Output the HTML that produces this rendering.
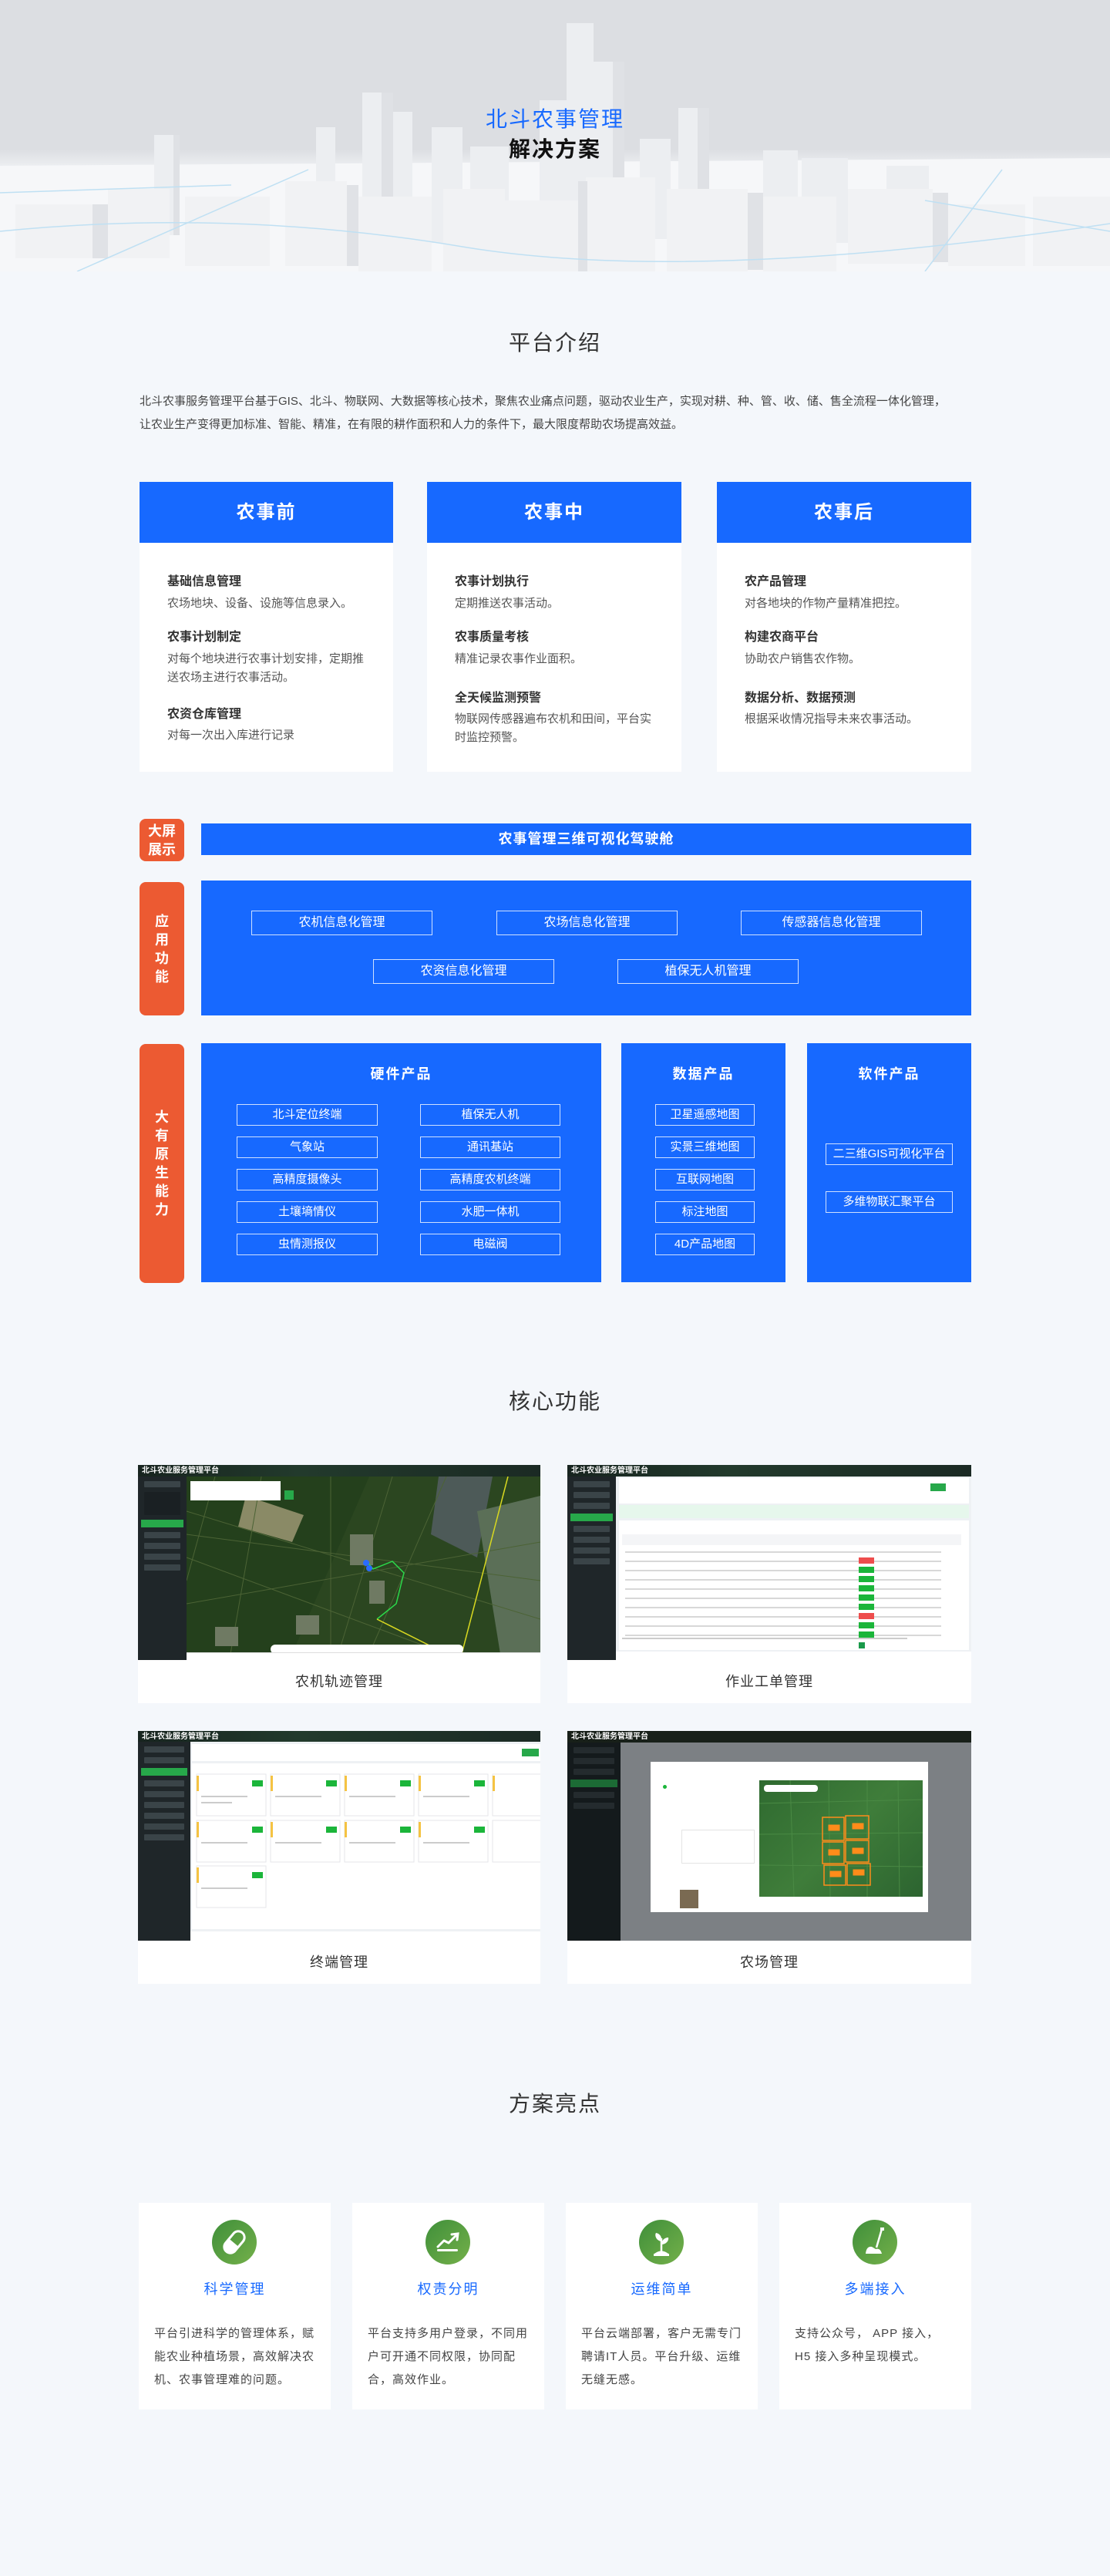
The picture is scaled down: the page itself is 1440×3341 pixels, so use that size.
<!DOCTYPE html>
<html><head><meta charset="utf-8">
<style>
*{margin:0;padding:0;box-sizing:border-box}
body{width:1440px;height:3341px;background:#f4f7fb;font-family:"Liberation Sans","Noto Sans CJK SC",sans-serif;position:relative;overflow:hidden;color:#333}
.a{position:absolute}
.h2{position:absolute;left:0;width:1440px;text-align:center;font-size:28px;color:#333;letter-spacing:2px}
.card{position:absolute;top:625px;height:376px;background:#fff}
.card .hd{height:79px;background:#1769ff;color:#fff;font-size:24px;font-weight:bold;text-align:center;line-height:79px;letter-spacing:2px}
.it{position:absolute;left:36px;font-size:16px;font-weight:bold;color:#333;line-height:24px}
.ds{position:absolute;left:36px;font-size:15px;color:#555;line-height:24px}
.lab{position:absolute;left:181px;width:58px;background:#ec5a32;border-radius:8px;color:#fff;font-weight:bold;font-size:18px;text-align:center;display:flex;align-items:center;justify-content:center;line-height:24px}
.blue{position:absolute;background:#1769ff;color:#fff}
.btn{position:absolute;border:1.5px solid #cfe0ff;color:#fff;text-align:center;font-size:16px}
.bt{font-size:18px;font-weight:bold;position:absolute;left:0;right:0;text-align:center;top:26px;letter-spacing:2px}
.shot{position:absolute;overflow:hidden;background:#eef1f4}
.top{position:absolute;left:0;top:0;right:0;height:15px;background:linear-gradient(90deg,#17241f,#223a2c 40%,#1b2a24);color:#fff;font-size:10px;font-weight:bold;line-height:15px;padding-left:5px}
.side{position:absolute;left:0;top:15px;bottom:0;width:63px;background:#1f2629}
.side i{display:block;height:8px;margin:6px 8px;background:#3a4448;border-radius:1px}
.side b{display:block;height:10px;margin:6px 4px;background:#27a84a}
.cap{position:absolute;background:#fff;text-align:center;font-size:18px;color:#333;letter-spacing:1px}
.hc{position:absolute;top:2857px;width:249px;height:268px;background:#fff}
.hc .ic{position:absolute;left:95px;top:22px;width:58px;height:58px;border-radius:50%;background:linear-gradient(135deg,#3f8f3a,#74b04a)}
.hc .t{position:absolute;top:98px;left:0;right:0;text-align:center;color:#1769ff;font-size:18px;letter-spacing:2px}
.hc .d{position:absolute;top:155px;left:20px;right:18px;font-size:15px;color:#444;line-height:30px;letter-spacing:1px}
</style></head><body>

<!-- hero -->
<div class="a" style="left:0;top:0;width:1440px;height:352px;background:linear-gradient(180deg,#dcdee2 0%,#dcdee2 55%,#eef0f3 62%,#f5f6f8 100%);overflow:hidden">
<svg width="1440" height="352" style="position:absolute;left:0;top:0">
<polygon points="0,215 1440,205 1440,352 0,352" fill="#f6f7f9"/>
<g fill="#eceef1">
<rect x="735" y="30" width="35" height="240"/><rect x="700" y="130" width="50" height="200"/><rect x="765" y="80" width="45" height="250"/>
<rect x="880" y="140" width="40" height="160"/><rect x="470" y="120" width="40" height="180"/><rect x="505" y="145" width="30" height="150"/>
<rect x="200" y="175" width="28" height="130"/><rect x="410" y="165" width="25" height="130"/><rect x="560" y="165" width="40" height="150"/>
<rect x="610" y="190" width="50" height="120"/><rect x="830" y="180" width="40" height="130"/>
<rect x="990" y="195" width="45" height="120"/><rect x="1040" y="205" width="60" height="110"/><rect x="1150" y="215" width="55" height="100"/>
</g>
<g fill="#dfe1e5"><rect x="795" y="80" width="15" height="250"/><rect x="495" y="120" width="15" height="180"/><rect x="905" y="140" width="15" height="160"/><rect x="225" y="175" width="8" height="130"/></g>
<g fill="#f1f2f4">
<rect x="20" y="265" width="100" height="70"/><rect x="140" y="245" width="80" height="90"/><rect x="240" y="255" width="110" height="90"/>
<rect x="370" y="235" width="80" height="110"/><rect x="465" y="255" width="95" height="97"/><rect x="575" y="245" width="80" height="107"/>
<rect x="640" y="260" width="110" height="92"/><rect x="760" y="230" width="90" height="122"/><rect x="865" y="245" width="105" height="107"/>
<rect x="990" y="255" width="95" height="97"/><rect x="1100" y="245" width="110" height="97"/><rect x="1230" y="265" width="100" height="80"/>
<rect x="1340" y="255" width="100" height="90"/>
</g>
<g fill="#e0e2e6"><rect x="120" y="265" width="20" height="70"/><rect x="450" y="240" width="15" height="105"/><rect x="750" y="235" width="12" height="117"/><rect x="970" y="250" width="20" height="100"/><rect x="1210" y="250" width="20" height="90"/></g>
<g stroke="#bfe0f3" stroke-width="1.5" fill="none"><path d="M0 300 Q300 270 600 320 T1440 290"/><path d="M100 352 L400 220"/><path d="M1300 220 L1200 352"/><path d="M0 250 L300 240"/><path d="M1200 260 L1440 300"/></g>
</svg>
<div class="a" style="left:0;width:1440px;top:133px;text-align:center;font-size:28px;color:#1769ff;letter-spacing:2px">北斗农事管理</div>
<div class="a" style="left:0;width:1440px;top:172px;text-align:center;font-size:28px;font-weight:bold;color:#111;letter-spacing:2px">解决方案</div>
</div>

<div class="h2" style="top:423px">平台介绍</div>
<div class="a" style="left:181px;top:506px;width:1080px;font-size:15px;color:#444;line-height:30px">北斗农事服务管理平台基于GIS、北斗、物联网、大数据等核心技术，聚焦农业痛点问题，驱动农业生产，实现对耕、种、管、收、储、售全流程一体化管理，<br>让农业生产变得更加标准、智能、精准，在有限的耕作面积和人力的条件下，最大限度帮助农场提高效益。</div>

<div class="card" style="left:181px;width:329px"><div class="hd">农事前</div>
<div class="it" style="top:118px">基础信息管理</div><div class="ds" style="top:146px">农场地块、设备、设施等信息录入。</div>
<div class="it" style="top:190px">农事计划制定</div><div class="ds" style="top:218px">对每个地块进行农事计划安排，定期推<br>送农场主进行农事活动。</div>
<div class="it" style="top:290px">农资仓库管理</div><div class="ds" style="top:317px">对每一次出入库进行记录</div></div>

<div class="card" style="left:554px;width:330px"><div class="hd">农事中</div>
<div class="it" style="top:118px">农事计划执行</div><div class="ds" style="top:146px">定期推送农事活动。</div>
<div class="it" style="top:190px">农事质量考核</div><div class="ds" style="top:218px">精准记录农事作业面积。</div>
<div class="it" style="top:269px">全天候监测预警</div><div class="ds" style="top:296px">物联网传感器遍布农机和田间，平台实<br>时监控预警。</div></div>

<div class="card" style="left:930px;width:330px"><div class="hd">农事后</div>
<div class="it" style="top:118px">农产品管理</div><div class="ds" style="top:146px">对各地块的作物产量精准把控。</div>
<div class="it" style="top:190px">构建农商平台</div><div class="ds" style="top:218px">协助农户销售农作物。</div>
<div class="it" style="top:269px">数据分析、数据预测</div><div class="ds" style="top:296px">根据采收情况指导未来农事活动。</div></div>

<!-- architecture -->
<div class="lab" style="top:1062px;height:55px">大屏<br>展示</div>
<div class="blue" style="left:261px;top:1068px;width:999px;height:41px;text-align:center;line-height:41px;font-size:18px;font-weight:bold;letter-spacing:1px">农事管理三维可视化驾驶舱</div>

<div class="lab" style="top:1144px;height:173px;width:58px">应<br>用<br>功<br>能</div>
<div class="blue" style="left:261px;top:1142px;width:999px;height:175px"></div>
<div class="btn" style="left:326px;top:1181px;width:235px;height:32px;line-height:29px">农机信息化管理</div>
<div class="btn" style="left:644px;top:1181px;width:235px;height:32px;line-height:29px">农场信息化管理</div>
<div class="btn" style="left:961px;top:1181px;width:235px;height:32px;line-height:29px">传感器信息化管理</div>
<div class="btn" style="left:484px;top:1244px;width:235px;height:32px;line-height:29px">农资信息化管理</div>
<div class="btn" style="left:801px;top:1244px;width:235px;height:32px;line-height:29px">植保无人机管理</div>

<div class="lab" style="top:1354px;height:310px">大<br>有<br>原<br>生<br>能<br>力</div>
<div class="blue" style="left:261px;top:1353px;width:519px;height:310px"><div class="bt">硬件产品</div></div>
<div class="blue" style="left:806px;top:1353px;width:213px;height:310px"><div class="bt">数据产品</div></div>
<div class="blue" style="left:1047px;top:1353px;width:213px;height:310px"><div class="bt">软件产品</div></div>

<div class="btn" style="left:307px;top:1432px;width:183px;height:28px;line-height:25px;font-size:15px">北斗定位终端</div>
<div class="btn" style="left:545px;top:1432px;width:182px;height:28px;line-height:25px;font-size:15px">植保无人机</div>
<div class="btn" style="left:307px;top:1474px;width:183px;height:28px;line-height:25px;font-size:15px">气象站</div>
<div class="btn" style="left:545px;top:1474px;width:182px;height:28px;line-height:25px;font-size:15px">通讯基站</div>
<div class="btn" style="left:307px;top:1516px;width:183px;height:28px;line-height:25px;font-size:15px">高精度摄像头</div>
<div class="btn" style="left:545px;top:1516px;width:182px;height:28px;line-height:25px;font-size:15px">高精度农机终端</div>
<div class="btn" style="left:307px;top:1558px;width:183px;height:28px;line-height:25px;font-size:15px">土壤墒情仪</div>
<div class="btn" style="left:545px;top:1558px;width:182px;height:28px;line-height:25px;font-size:15px">水肥一体机</div>
<div class="btn" style="left:307px;top:1600px;width:183px;height:28px;line-height:25px;font-size:15px">虫情测报仪</div>
<div class="btn" style="left:545px;top:1600px;width:182px;height:28px;line-height:25px;font-size:15px">电磁阀</div>

<div class="btn" style="left:850px;top:1432px;width:129px;height:28px;line-height:25px;font-size:15px">卫星遥感地图</div>
<div class="btn" style="left:850px;top:1474px;width:129px;height:28px;line-height:25px;font-size:15px">实景三维地图</div>
<div class="btn" style="left:850px;top:1516px;width:129px;height:28px;line-height:25px;font-size:15px">互联网地图</div>
<div class="btn" style="left:850px;top:1558px;width:129px;height:28px;line-height:25px;font-size:15px">标注地图</div>
<div class="btn" style="left:850px;top:1600px;width:129px;height:28px;line-height:25px;font-size:15px">4D产品地图</div>

<div class="btn" style="left:1071px;top:1483px;width:165px;height:28px;line-height:25px;font-size:15px">二三维GIS可视化平台</div>
<div class="btn" style="left:1071px;top:1545px;width:165px;height:28px;line-height:25px;font-size:15px">多维物联汇聚平台</div>

<!-- core -->
<div class="h2" style="top:1796px">核心功能</div>

<!-- shot 1 map -->
<div class="shot" style="left:179px;top:1900px;width:522px;height:253px;background:#2d4a22">
<svg width="522" height="253" style="position:absolute;left:0;top:0">
<rect x="63" y="15" width="459" height="230" fill="#2b4620"/>
<polygon points="63,15 300,15 200,245 63,245" fill="#24401c"/>
<polygon points="140,40 215,65 200,100 130,80" fill="#8a8a66"/>
<polygon points="390,15 460,15 440,120 380,90" fill="#4d5a58"/>
<polygon points="440,60 522,40 522,245 470,245" fill="#5b6f57"/>
<g stroke="#4c6335" stroke-width="1"><path d="M63 60 L522 200"/><path d="M63 120 L400 245"/><path d="M250 15 L250 245"/><path d="M330 15 L260 245"/><path d="M100 15 L63 150"/><path d="M400 15 L300 245"/><path d="M63 90 L522 150"/><path d="M63 180 L522 100"/><path d="M160 15 L120 245"/></g>
<g fill="#6f7a63"><rect x="275" y="90" width="30" height="40"/><rect x="300" y="150" width="20" height="30"/><rect x="100" y="210" width="30" height="25"/><rect x="205" y="195" width="30" height="25"/></g>
<path d="M297 125 L305 135 L330 125 L345 140 L335 180 L310 200" stroke="#2bd84a" stroke-width="1.5" fill="none"/>
<path d="M310 200 L400 245" stroke="#d8d820" stroke-width="1.5"/><path d="M480 15 L420 245" stroke="#d8d820" stroke-width="1.5"/>
<circle cx="296" cy="127" r="4" fill="#2a6cff"/><circle cx="300" cy="134" r="4" fill="#2a6cff"/>
<rect x="172" y="233" width="250" height="12" rx="6" fill="#fff"/>
<rect x="68" y="21" width="117" height="25" fill="#fff"/><rect x="190" y="33" width="12" height="12" fill="#27a84a"/>
</svg>
<div class="top">北斗农业服务管理平台</div>
<div class="side"><i></i><i style="background:#1a2023;height:30px"></i><b></b><i></i><i></i><i></i><i></i></div>
<div class="a" style="left:63px;right:0;bottom:0;height:10px;background:#fff;border-top:1px solid #ddd"></div>
</div>
<div class="cap" style="left:179px;top:2153px;width:522px;height:56px;line-height:56px">农机轨迹管理</div>

<!-- shot 2 table -->
<div class="shot" style="left:736px;top:1900px;width:524px;height:253px">
<div class="top">北斗农业服务管理平台</div>
<div class="side"><i></i><i></i><i></i><b></b><i></i><i></i><i></i><i></i></div>
<div class="a" style="left:67px;top:17px;width:454px;height:33px;background:#fff"><div class="a" style="right:30px;top:7px;width:20px;height:10px;background:#27a84a"></div></div>
<div class="a" style="left:67px;top:52px;width:454px;height:17px;background:#e6f7ec"></div>
<div class="a" style="left:67px;top:72px;width:454px;height:168px;background:#fff">
<svg width="454" height="168">
<rect x="4" y="18" width="440" height="14" fill="#f4f5f7"/>
<g fill="#d8d8d8"><rect x="8" y="40" width="410" height="2"/><rect x="8" y="52" width="410" height="2"/><rect x="8" y="64" width="410" height="2"/><rect x="8" y="76" width="410" height="2"/><rect x="8" y="88" width="410" height="2"/><rect x="8" y="100" width="410" height="2"/><rect x="8" y="112" width="410" height="2"/><rect x="8" y="124" width="410" height="2"/><rect x="8" y="136" width="410" height="2"/><rect x="8" y="148" width="410" height="2"/></g>
<g fill="#1bb53a"><rect x="311" y="60" width="20" height="8"/><rect x="311" y="72" width="20" height="8"/><rect x="311" y="84" width="20" height="8"/><rect x="311" y="96" width="20" height="8"/><rect x="311" y="108" width="20" height="8"/><rect x="311" y="132" width="20" height="8"/><rect x="311" y="144" width="20" height="8"/></g>
<g fill="#ee4d4d"><rect x="311" y="48" width="20" height="8"/><rect x="311" y="120" width="20" height="8"/></g>
<rect x="4" y="152" width="370" height="2" fill="#ccc"/><rect x="311" y="158" width="8" height="8" fill="#1a9a4a"/>
</svg></div>
<div class="a" style="left:63px;right:0;bottom:0;height:11px;background:#fff"></div>
</div>
<div class="cap" style="left:736px;top:2153px;width:524px;height:56px;line-height:56px">作业工单管理</div>

<!-- shot 3 grid -->
<div class="shot" style="left:179px;top:2245px;width:522px;height:272px">
<div class="top" style="height:14px">北斗农业服务管理平台</div>
<div class="side" style="top:14px;width:68px"><i></i><i></i><b></b><i></i><i></i><i></i><i></i><i></i><i></i></div>
<div class="a" style="left:70px;top:17px;width:452px;height:22px;background:#fff"><div class="a" style="right:2px;top:6px;width:22px;height:10px;background:#27a84a"></div></div>
<div class="a" style="left:70px;top:42px;width:452px;height:215px;background:#fff">
<svg width="452" height="215">
<g fill="#fff" stroke="#e4e6ea">
<rect x="6" y="14" width="90" height="54"/><rect x="102" y="14" width="90" height="54"/><rect x="198" y="14" width="90" height="54"/><rect x="294" y="14" width="90" height="54"/><rect x="390" y="14" width="90" height="54"/>
<rect x="6" y="74" width="90" height="54"/><rect x="102" y="74" width="90" height="54"/><rect x="198" y="74" width="90" height="54"/><rect x="294" y="74" width="90" height="54"/><rect x="390" y="74" width="90" height="54"/>
<rect x="6" y="133" width="90" height="54"/></g>
<g fill="#f5c342"><rect x="6" y="16" width="3" height="20"/><rect x="102" y="16" width="3" height="20"/><rect x="198" y="16" width="3" height="20"/><rect x="294" y="16" width="3" height="20"/><rect x="390" y="16" width="3" height="20"/><rect x="6" y="76" width="3" height="20"/><rect x="102" y="76" width="3" height="20"/><rect x="198" y="76" width="3" height="20"/><rect x="294" y="76" width="3" height="20"/><rect x="6" y="135" width="3" height="20"/></g>
<g fill="#1bb53a"><rect x="78" y="22" width="14" height="8"/><rect x="174" y="22" width="14" height="8"/><rect x="270" y="22" width="14" height="8"/><rect x="366" y="22" width="14" height="8"/><rect x="78" y="82" width="14" height="8"/><rect x="174" y="82" width="14" height="8"/><rect x="270" y="82" width="14" height="8"/><rect x="366" y="82" width="14" height="8"/><rect x="78" y="141" width="14" height="8"/></g>
<g fill="#ccc"><rect x="12" y="42" width="60" height="2"/><rect x="12" y="50" width="40" height="2"/><rect x="108" y="42" width="60" height="2"/><rect x="204" y="42" width="60" height="2"/><rect x="300" y="42" width="60" height="2"/><rect x="12" y="102" width="60" height="2"/><rect x="108" y="102" width="60" height="2"/><rect x="204" y="102" width="60" height="2"/><rect x="300" y="102" width="60" height="2"/><rect x="12" y="161" width="60" height="2"/></g>
</svg></div>
<div class="a" style="left:68px;right:0;bottom:0;height:12px;background:#fff"></div>
</div>
<div class="cap" style="left:179px;top:2517px;width:522px;height:56px;line-height:56px">终端管理</div>

<!-- shot 4 modal -->
<div class="shot" style="left:736px;top:2245px;width:524px;height:272px;background:#7c8084">
<div class="top" style="height:15px;background:#182019">北斗农业服务管理平台</div>
<div class="side" style="width:69px;background:#141a1c"><i style="background:#242b2e"></i><i style="background:#242b2e"></i><i style="background:#242b2e"></i><b style="background:#1c6b35"></b><i style="background:#242b2e"></i><i style="background:#242b2e"></i></div>
<div class="a" style="left:108px;top:40px;width:360px;height:195px;background:#fff">
<div class="a" style="left:141px;top:24px;width:212px;height:151px;background:linear-gradient(135deg,#2f6a30,#3f7d3a 50%,#2c6430)">
<svg width="212" height="151"><g stroke="#4a8a44" stroke-width="1"><path d="M0 30 L212 25"/><path d="M0 70 L212 68"/><path d="M0 110 L212 112"/><path d="M40 0 L45 151"/><path d="M90 0 L92 151"/><path d="M140 0 L140 151"/><path d="M180 0 L182 151"/></g>
<g fill="#ff8c1a" stroke="#ff8c1a"><rect x="82" y="48" width="28" height="30" fill="none" stroke-width="1.5"/><rect x="112" y="46" width="30" height="30" fill="none" stroke-width="1.5"/><rect x="82" y="80" width="28" height="28" fill="none" stroke-width="1.5"/><rect x="112" y="78" width="30" height="28" fill="none" stroke-width="1.5"/><rect x="84" y="110" width="28" height="26" fill="none" stroke-width="1.5"/><rect x="114" y="108" width="30" height="28" fill="none" stroke-width="1.5"/>
<rect x="90" y="58" width="14" height="7"/><rect x="121" y="56" width="14" height="7"/><rect x="90" y="90" width="14" height="7"/><rect x="121" y="88" width="14" height="7"/><rect x="92" y="118" width="14" height="7"/><rect x="122" y="116" width="14" height="7"/></g>
<rect x="6" y="6" width="70" height="9" rx="4" fill="#fff"/></svg></div>
<div class="a" style="left:40px;top:88px;width:95px;height:44px;border:1px solid #e4e4e4"></div>
<div class="a" style="left:38px;top:166px;width:24px;height:24px;background:#7a6a52"></div>
<div class="a" style="left:16px;top:30px;width:5px;height:5px;border-radius:50%;background:#1bb53a"></div>
</div>
</div>
<div class="cap" style="left:736px;top:2517px;width:524px;height:56px;line-height:56px">农场管理</div>

<!-- highlights -->
<div class="h2" style="top:2707px">方案亮点</div>

<div class="hc" style="left:180px"><div class="ic"><svg width="58" height="58"><g transform="rotate(40 29 29)"><rect x="21" y="13" width="16" height="32" rx="8" fill="none" stroke="#fff" stroke-width="3"/><path d="M21 30 h16 v7 a8 8 0 0 1 -16 0z" fill="#fff"/></g></svg></div>
<div class="t">科学管理</div><div class="d">平台引进科学的管理体系，赋能农业种植场景，高效解决农机、农事管理难的问题。</div></div>

<div class="hc" style="left:457px"><div class="ic"><svg width="58" height="58"><path d="M16 35 L24 27 L30 30 L40 20" stroke="#fff" stroke-width="3" fill="none" stroke-linecap="round" stroke-linejoin="round"/><path d="M34 19 L42 18 L41 26" stroke="#fff" stroke-width="3" fill="none" stroke-linecap="round"/><rect x="15" y="38" width="27" height="3" rx="1.5" fill="#fff"/></svg></div>
<div class="t">权责分明</div><div class="d">平台支持多用户登录，不同用户可开通不同权限，协同配合，高效作业。</div></div>

<div class="hc" style="left:734px"><div class="ic"><svg width="58" height="58"><path d="M29 44 V24" stroke="#fff" stroke-width="2.5"/><path d="M29 28 C22 27 20 20 22 17 C27 18 30 22 29 28z" fill="#fff"/><path d="M29 32 C35 32 39 27 38 23 C33 23 29 27 29 32z" fill="#fff"/><path d="M20 44 Q29 37 38 44z" fill="#fff"/><rect x="19" y="44" width="20" height="3" fill="#fff"/></svg></div>
<div class="t">运维简单</div><div class="d">平台云端部署，客户无需专门聘请IT人员。平台升级、运维无缝无感。</div></div>

<div class="hc" style="left:1011px"><div class="ic"><svg width="58" height="58"><path d="M38 12 L31 36" stroke="#fff" stroke-width="2.5"/><rect x="36" y="10" width="5" height="4" fill="#fff"/><path d="M17 44 Q18 34 25 35 L30 38 Q36 36 38 44z" fill="#fff"/></svg></div>
<div class="t">多端接入</div><div class="d">支持公众号， APP 接入， H5 接入多种呈现模式。</div></div>

</body></html>
